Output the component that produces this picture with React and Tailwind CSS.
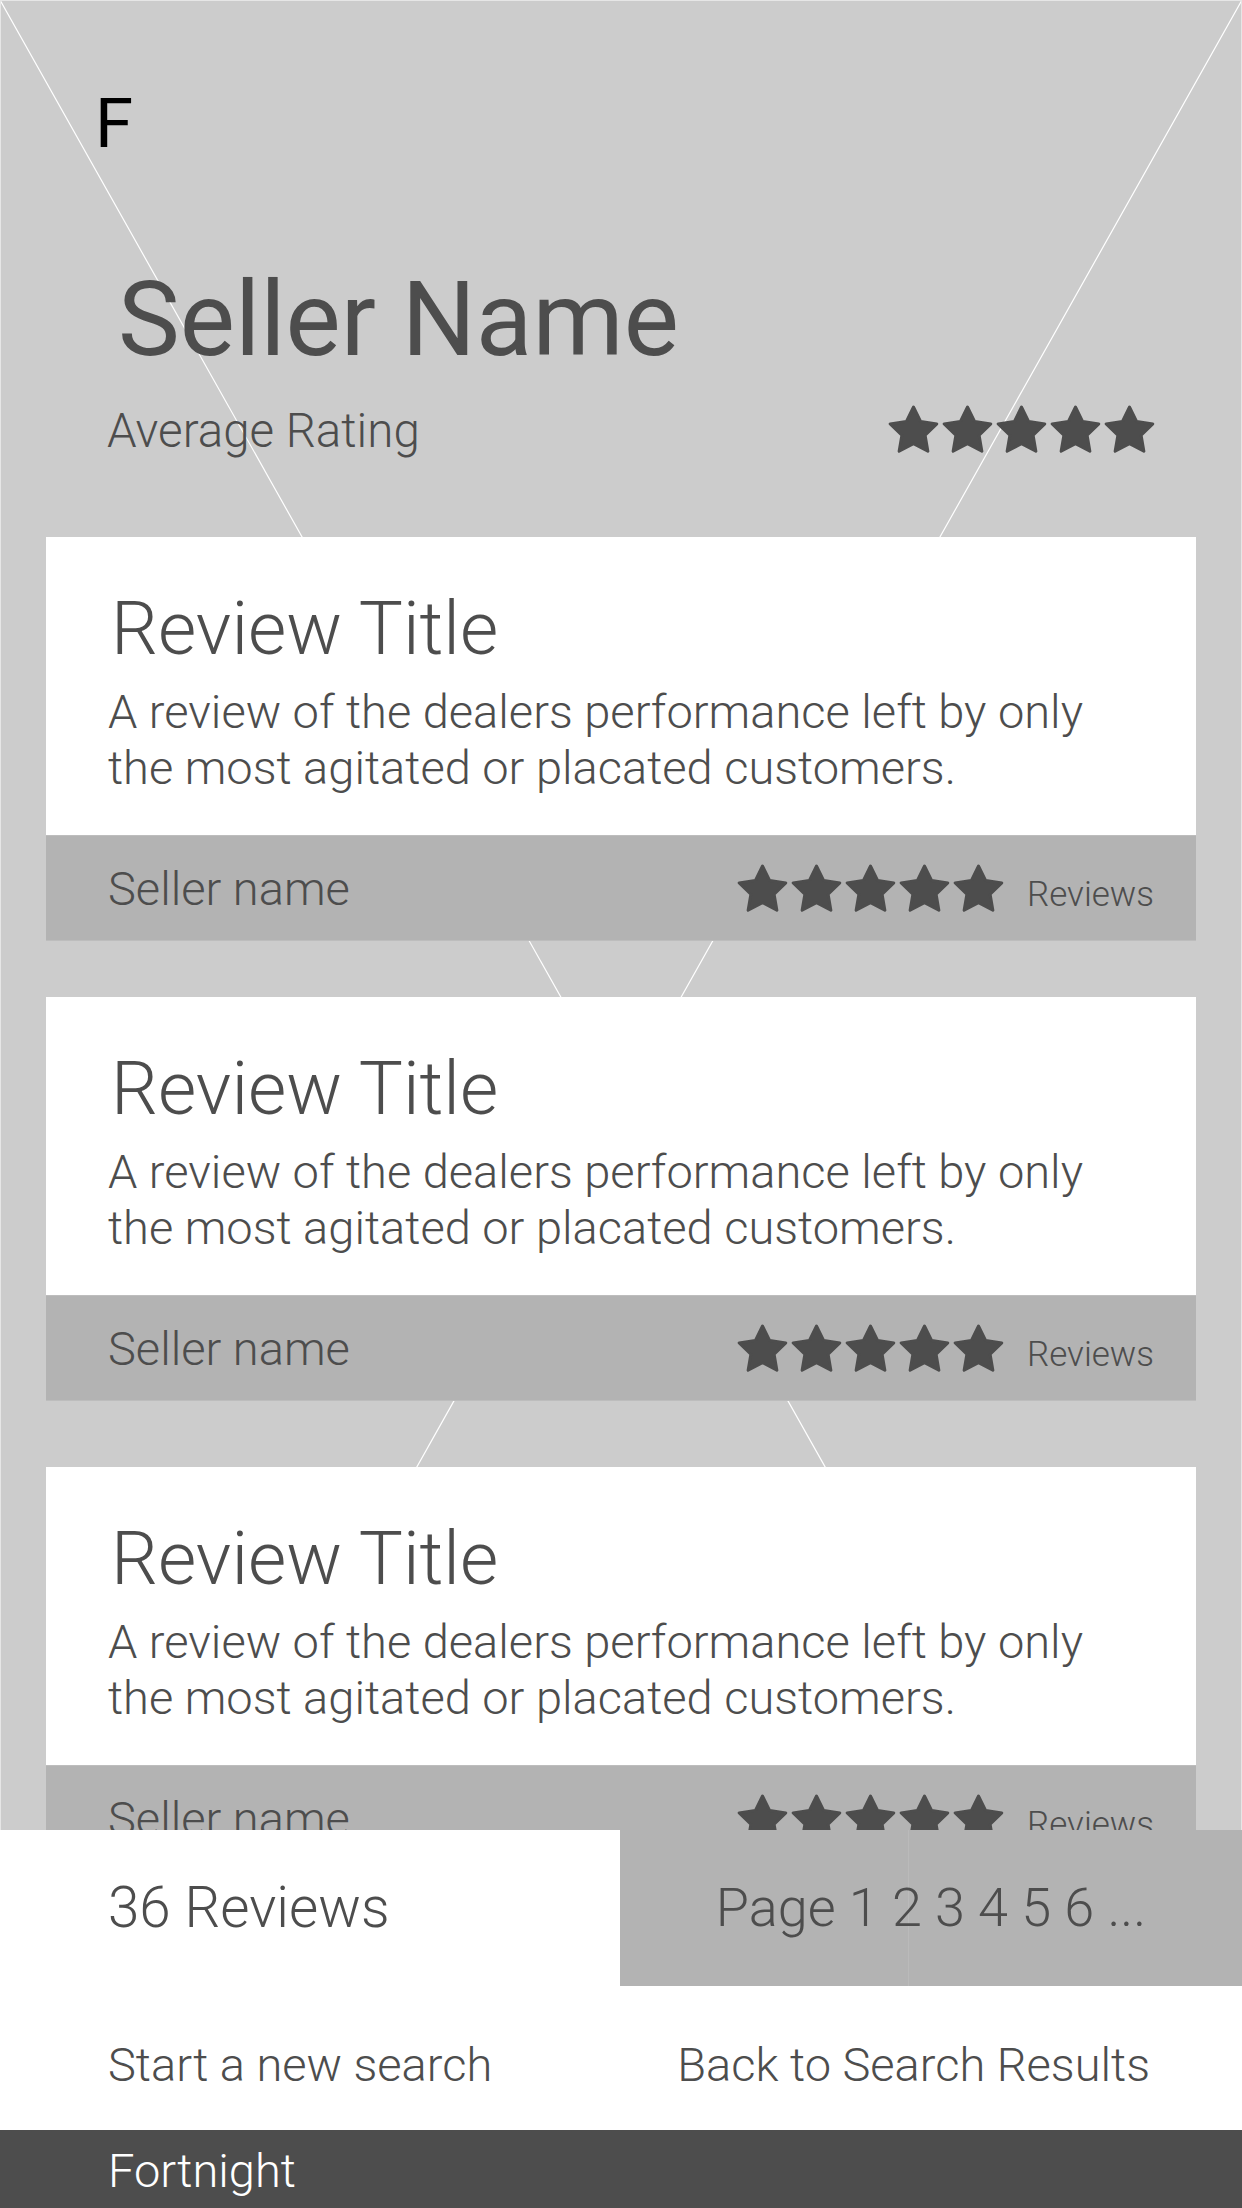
import React from "react";

function Star() {
  return (
    <svg width="51" height="49" viewBox="0 0 52 50" className="shrink-0">
      <polygon
        points="26,2 33.35,16.89 49.78,19.27 37.89,30.86 40.69,47.23 26,39.5 11.31,47.23 14.11,30.86 2.22,19.27 18.65,16.89"
        fill="#4d4d4d"
        stroke="#4d4d4d"
        strokeWidth="3"
        strokeLinejoin="round"
      />
    </svg>
  );
}

function Stars() {
  return (
    <div className="flex items-center gap-[3px]">
      <Star />
      <Star />
      <Star />
      <Star />
      <Star />
    </div>
  );
}

function ReviewCard({ className }) {
  return (
    <div className={"mx-[46px] " + className}>
      <div className="bg-white pl-[62px] pt-[55px] pb-[39px]">
        <div className="pl-[3px] text-[74px] leading-none text-[#4d4d4d]">Review Title</div>
        <div className="mt-[18px] text-[47px] leading-[56px] text-[#4d4d4d]">
          A review of the dealers performance left by only
          <br />
          the most agitated or placated customers.
        </div>
      </div>
      <div className="flex h-[106px] items-center justify-between border-y border-[#bdbdbd] bg-[#b3b3b3] pl-[62px] pr-[42px]">
        <div className="text-[47px] leading-none text-[#4d4d4d]">Seller name</div>
        <div className="flex items-center gap-[23px]">
          <Stars />
          <div className="pt-[13px] text-[35px] leading-none text-[#4d4d4d]">Reviews</div>
        </div>
      </div>
    </div>
  );
}

export default function App() {
  return (
    <div className="relative h-[2208px] w-[1242px] overflow-hidden bg-[#cccccc] font-['Roboto','Liberation_Sans',sans-serif] font-light">
      <svg
        className="absolute inset-0"
        width="1242"
        height="2208"
        viewBox="0 0 1242 2208"
      >
        <line x1="0" y1="0" x2="1242" y2="2208" stroke="#ffffff" strokeWidth="1.2" />
        <line x1="1242" y1="0" x2="0" y2="2208" stroke="#ffffff" strokeWidth="1.2" />
        <rect x="0.5" y="0.5" width="1241" height="2207" fill="none" stroke="#e6e6e6" strokeWidth="1" />
      </svg>

      <div className="relative flex h-[2208px] flex-col">
        <div className="h-[1830px] overflow-hidden">
          <div className="pl-[95px] pt-[89px] text-[69px] font-normal leading-none text-black">F</div>
          <div className="mt-[110px] pl-[118px] text-[104px] font-normal leading-none text-[#4d4d4d]">
            Seller Name
          </div>
          <div className="mt-[33px] flex h-[48px] items-center justify-between pl-[107px] pr-[87px]">
            <div className="pt-[5px] text-[47.5px] leading-none text-[#4d4d4d]">Average Rating</div>
            <Stars />
          </div>
          <ReviewCard className="mt-[84px]" />
          <ReviewCard className="mt-[56px]" />
          <ReviewCard className="mt-[66px]" />
        </div>

        <div className="flex h-[156px]">
          <div className="flex w-[620px] items-center bg-white pl-[108px]">
            <div className="text-[56.5px] leading-none text-[#4d4d4d]">36 Reviews</div>
          </div>
          <div className="relative flex flex-1 items-center justify-center bg-[#b3b3b3]">
            <div className="absolute bottom-0 left-[288px] top-0 w-px bg-[#bababa]" />
            <div className="relative text-[54px] leading-none text-[#4d4d4d]">Page 1 2 3 4 5 6 ...</div>
          </div>
        </div>

        <div className="flex h-[144px] justify-between bg-white pl-[108px] pr-[92px] pt-[55px]">
          <div className="text-[47px] leading-none text-[#4d4d4d]">Start a new search</div>
          <div className="text-[47px] leading-none text-[#4d4d4d]">Back to Search Results</div>
        </div>

        <div className="flex-1 bg-[#4d4d4d] pl-[108px] pt-[17px]">
          <div className="text-[47px] leading-none text-white">Fortnight</div>
        </div>
      </div>
    </div>
  );
}
